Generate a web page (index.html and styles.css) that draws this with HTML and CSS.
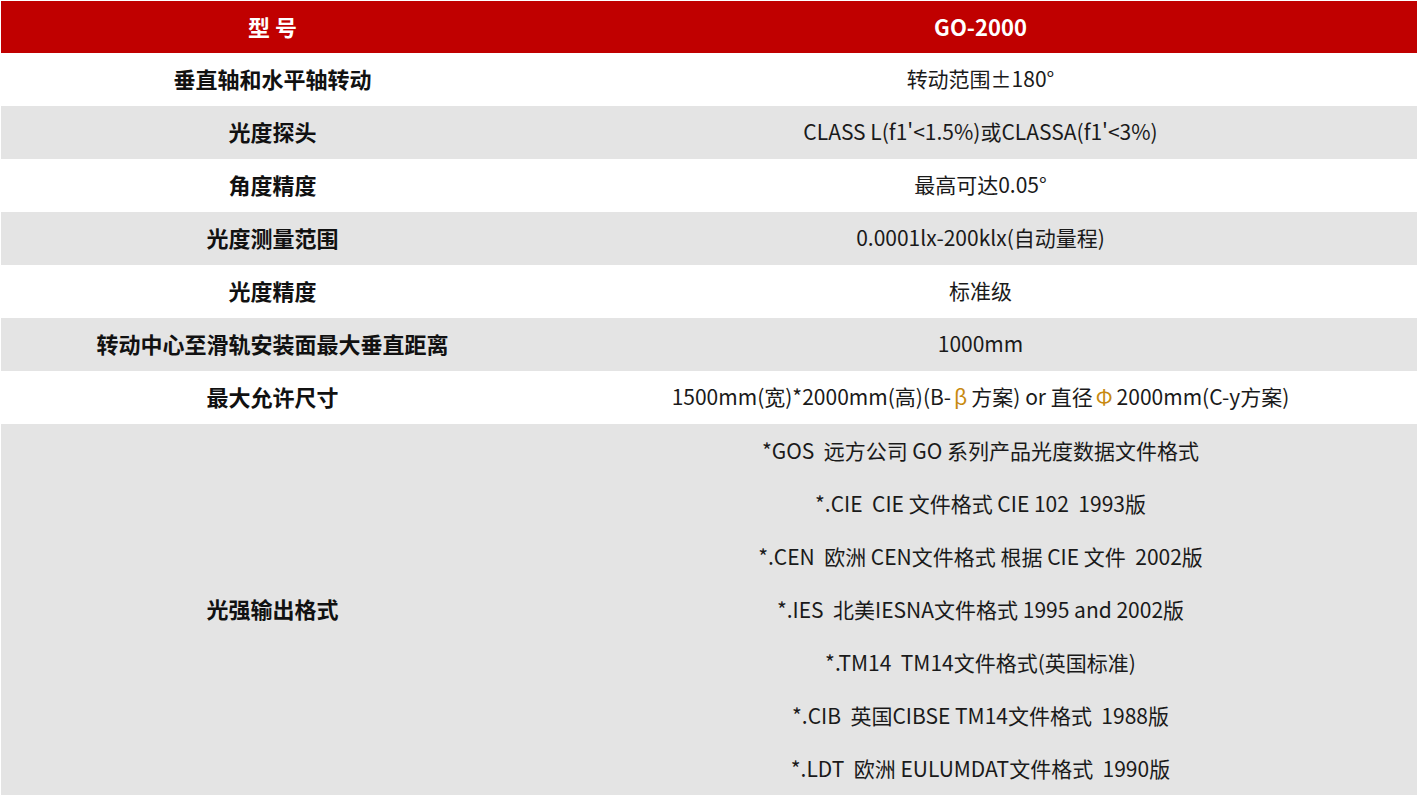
FILE: index.html
```html
<!DOCTYPE html>
<html lang="zh-CN">
<head>
<meta charset="utf-8">
<title>GO-2000</title>
<link rel="stylesheet" href="styles.css">
</head>
<body>
<table class="spec">
  <colgroup><col class="c-name"><col class="c-val"></colgroup>
  <thead>
    <tr class="head"><th>型&nbsp;号</th><th>GO-2000</th></tr>
  </thead>
  <tbody>
    <tr class="w"><td class="k">垂直轴和水平轴转动</td><td class="v">转动范围±180°</td></tr>
    <tr class="g"><td class="k">光度探头</td><td class="v">CLASS L(f1'&lt;1.5%)或CLASSA(f1'&lt;3%)</td></tr>
    <tr class="w"><td class="k">角度精度</td><td class="v">最高可达0.05°</td></tr>
    <tr class="g"><td class="k">光度测量范围</td><td class="v">0.0001lx-200klx(自动量程)</td></tr>
    <tr class="w"><td class="k">光度精度</td><td class="v">标准级</td></tr>
    <tr class="g"><td class="k">转动中心至滑轨安装面最大垂直距离</td><td class="v">1000mm</td></tr>
    <tr class="w"><td class="k">最大允许尺寸</td><td class="v">1500mm(宽)*2000mm(高)(B-<span class="sym">β</span>方案) or 直径<span class="sym">Φ</span>2000mm(C-y方案)</td></tr>
    <tr class="g last"><td class="k">光强输出格式</td><td class="v list">
      <p>*GOS&nbsp; 远方公司 GO 系列产品光度数据文件格式</p>
      <p>*.CIE&nbsp; CIE 文件格式 CIE 102&nbsp; 1993版</p>
      <p>*.CEN&nbsp; 欧洲 CEN文件格式 根据 CIE 文件&nbsp; 2002版</p>
      <p>*.IES&nbsp; 北美IESNA文件格式 1995 and 2002版</p>
      <p>*.TM14&nbsp; TM14文件格式(英国标准)</p>
      <p>*.CIB&nbsp; 英国CIBSE TM14文件格式&nbsp; 1988版</p>
      <p>*.LDT&nbsp; 欧洲 EULUMDAT文件格式&nbsp; 1990版</p>
    </td></tr>
  </tbody>
</table>
</body>
</html>
```

FILE: styles.css
```css
html, body {
  margin: 0;
  padding: 0;
  background: #ffffff;
}
body {
  padding: 1px 0 0 1px;
  font-family: "Noto Sans CJK SC", "Noto Sans", sans-serif;
  color: #111111;
}
.spec {
  width: 1416px;
  border-collapse: collapse;
  border-spacing: 0;
  table-layout: fixed;
}
.c-name { width: 543px; }
.c-val { width: 873px; }
.spec th, .spec td {
  padding: 0 0 4px 0;
  text-align: center;
  vertical-align: middle;
  line-height: 26px;
}
.head th {
  height: 49px;
  padding-bottom: 3px;
  background: #c00000;
  color: #ffffff;
  font-weight: 700;
  font-size: 22px;
}
.spec td { height: 49px; }
.w td { background: #ffffff; }
.g td { background: #e4e4e4; }
.k { font-weight: 700; font-size: 22px; }
.v { font-weight: 400; font-size: 21px; color: #1a1a1a; }
.sym { color: #c88a10; padding: 0 4px 0 3px; }
.spec td.list { padding: 0; }
.list p {
  margin: 0;
  height: 51px;
  padding-bottom: 2px;
  display: flex;
  align-items: center;
  justify-content: center;
}
```
